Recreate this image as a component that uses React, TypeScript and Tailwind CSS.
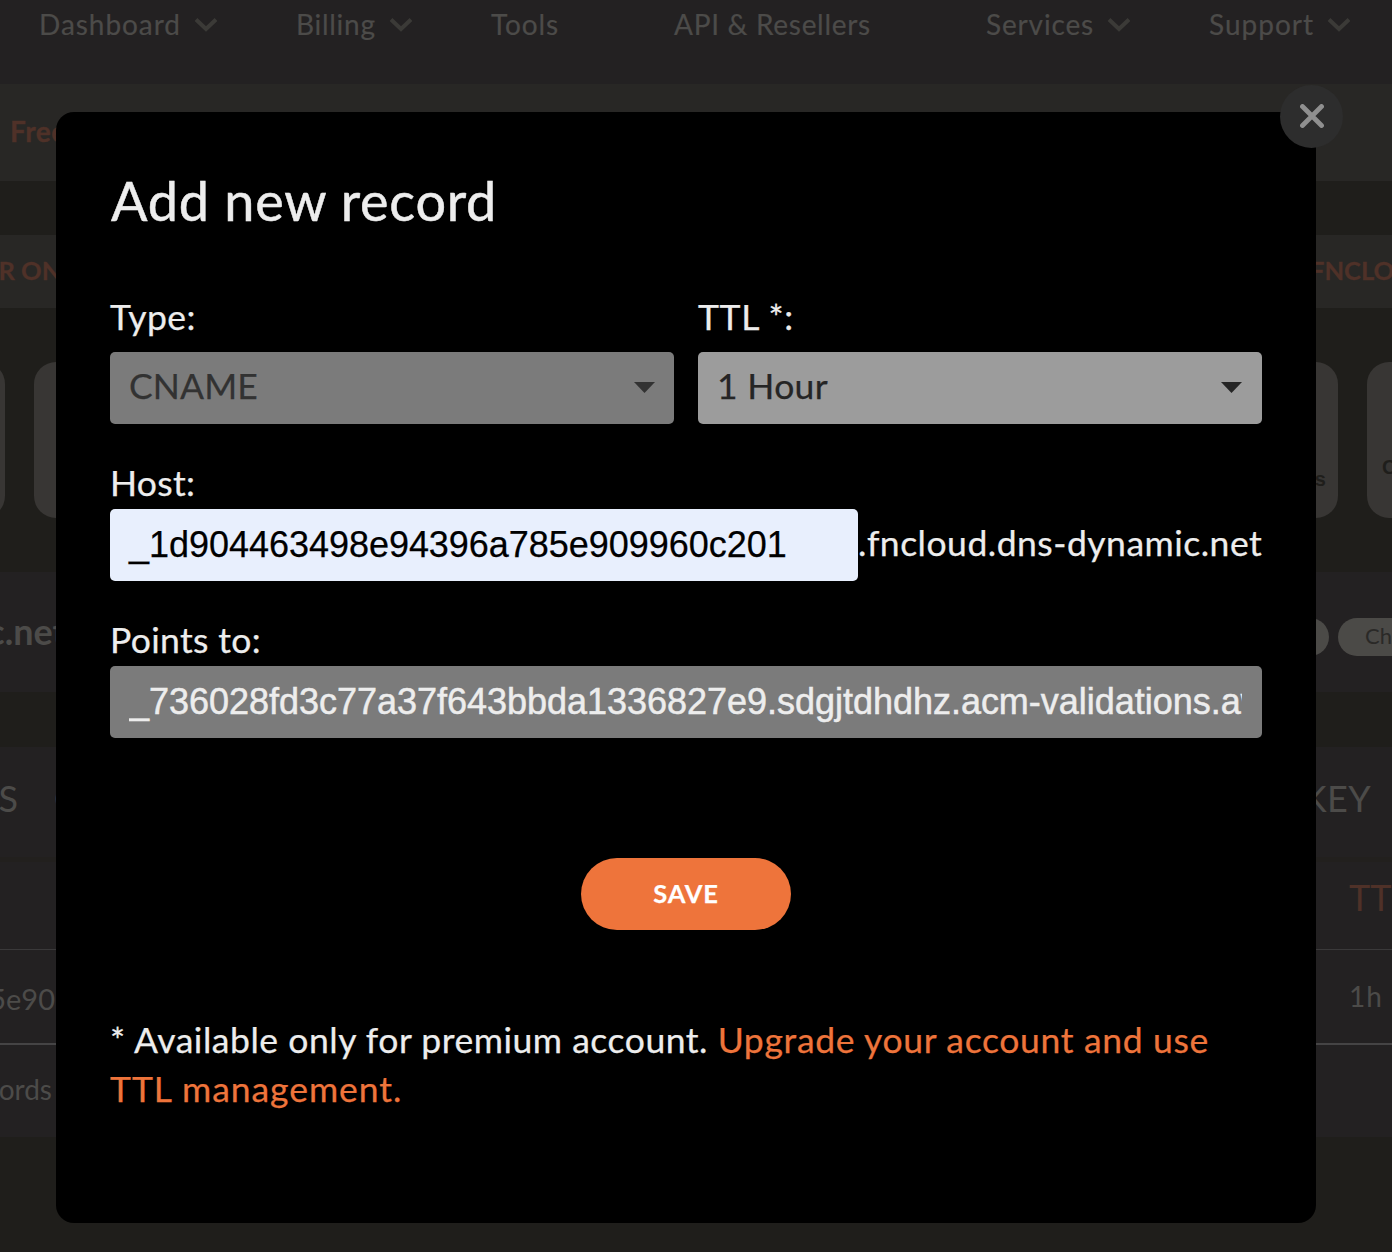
import React from "react";

function Chevron() {
  return (
    <svg width="24" height="14" viewBox="0 0 24 14" className="-mx-px shrink-0" fill="none">
      <path d="M2 1.5 L12 11 L22 1.5" stroke="#3b3a37" strokeWidth="4" />
    </svg>
  );
}

function NavItem({ label, menu, className }: { label: string; menu?: boolean; className: string }) {
  return (
    <div className={"flex items-center gap-[14px] h-[50px] " + className}>
      <span className="-mt-0.5">{label}</span>
      {menu && <Chevron />}
    </div>
  );
}

function Caret({ className }: { className: string }) {
  return (
    <svg width="21" height="11" viewBox="0 0 21 11" className={className}>
      <path d="M0 0 H21 L10.5 11 Z" fill="currentColor" />
    </svg>
  );
}

function Page() {
  return (
    <div className="w-[1392px] h-[1252px] text-[28px] text-[#4c4b49] whitespace-nowrap">
      <nav className="h-[84px] bg-[#232122] pl-[39px] grid grid-cols-[257px_195px_183px_312px_223px_auto] [-webkit-text-stroke:0.2px]">
        <NavItem label="Dashboard" menu className="tracking-[0.95px]" />
        <NavItem label="Billing" menu className="tracking-[0.72px]" />
        <NavItem label="Tools" className="tracking-[0.88px]" />
        <NavItem label="API & Resellers" className="tracking-[0.69px]" />
        <NavItem label="Services" menu className="tracking-[0.84px]" />
        <NavItem label="Support" menu className="tracking-[1px]" />
      </nav>
      <div className="h-[97px] bg-[#282725] flex items-center pl-2.5 pb-[3px] font-bold text-[#4f3128] [-webkit-text-stroke:0.4px]">
        <span className="tracking-[0.5px]">Free</span>
      </div>
      <div className="mt-[54px] h-[73px] bg-[#282725] flex items-center justify-between font-bold text-[25.5px] text-[#4f3128] pb-[3px] [-webkit-text-stroke:0.3px]">
        <div className="w-[76px] flex justify-end">
          <span>FOR ONE</span>
        </div>
        <div className="w-[82px]">FNCLOUD</div>
      </div>
      <div className="mt-[54px] h-[156px] flex justify-between font-['Liberation_Sans'] font-bold text-[20px] text-[#1f1e1b]">
        <div className="flex gap-[29px]">
          <div className="w-[160px] -ml-[155px] rounded-[22px] bg-[#383634]" />
          <div className="w-[160px] rounded-[22px] bg-[#383634]" />
        </div>
        <div className="flex gap-[29px]">
          <div className="w-[160px] rounded-[22px] bg-[#383634] flex justify-end pt-[102px] pr-3">records</div>
          <div className="w-[25px] rounded-l-[22px] bg-[#383634] pt-[90px] pl-[15px] overflow-hidden">Cloud</div>
        </div>
      </div>
      <div className="mt-[54px] h-[120px] bg-[#232122] flex justify-between items-center">
        <div className="w-[66px] flex justify-end pb-0.5 font-bold text-[36px]">dynamic.net</div>
        <div className="flex gap-[9px] pt-[10px] text-[22px] text-[#2a2927]">
          <div className="w-[120px] h-[38px] rounded-full bg-[#4b4a47]" />
          <div className="w-[54px] h-[38px] rounded-l-full bg-[#4b4a47] pl-[27px] leading-[36px] overflow-hidden">Check</div>
        </div>
      </div>
      <div className="mt-[55px] h-[390px] bg-[#232122]">
        <div className="h-[110px] flex justify-between items-center text-[36px] pb-[8px]">
          <div className="flex gap-[36px]">
            <div className="w-[18px] flex justify-end">DNS</div>
            <div>C</div>
          </div>
          <div className="pr-[21px] tracking-[0.4px]">KEY</div>
        </div>
        <div className="h-[5px] bg-[#22201e]" />
        <div className="h-[88px] border-b border-[#3a393a] flex justify-end items-center pb-[17px] text-[36px] text-[#4f3128]">
          <div className="w-[43px] overflow-hidden">TTL</div>
        </div>
        <div className="h-[95px] border-b-2 border-[#454445] flex justify-between items-center">
          <div className="w-[55px] flex justify-end text-[29px] pt-[5px]">5e90</div>
          <div className="w-[43px] pb-[1px] tracking-[1px]">1h</div>
        </div>
        <div className="h-[92px] flex items-center pb-1">
          <div className="w-[52px] flex justify-end">records</div>
        </div>
      </div>
    </div>
  );
}

export default function App() {
  return (
    <div className="relative w-[1392px] h-[1252px] overflow-hidden bg-[#1f1e1b] font-['Lato','Noto_Sans',sans-serif]">
      <Page />
      <div className="absolute left-[56px] top-[112px] w-[1260px] h-[1111px] rounded-[18px] bg-black px-[54px] pt-[59px] text-[35.5px] leading-[48px] text-[#ededed] whitespace-nowrap [-webkit-text-stroke:0.25px]">
        <h2 className="pl-px text-[54px] leading-[60px] tracking-[0.75px] [-webkit-text-stroke:0.5px]">Add new record</h2>
        <div className="mt-[62px] grid grid-cols-2 gap-6">
          <div>
            <div className="tracking-[0.4px]">Type:</div>
            <div className="mt-[11px] h-[72px] rounded-[5px] bg-[#7b7b7b] text-[#323232] pl-[19px] pr-[19px] flex items-center justify-between">
              <span className="pb-[5px] tracking-[0.1px]">CNAME</span>
              <Caret className="mb-px" />
            </div>
          </div>
          <div>
            <div className="tracking-[0.6px]">TTL *:</div>
            <div className="mt-[11px] h-[72px] rounded-[5px] bg-[#9c9c9c] text-[#252525] pl-[19px] pr-5 flex items-center justify-between">
              <span className="pb-[5px] tracking-[0.3px]">1 Hour</span>
              <Caret className="mb-px" />
            </div>
          </div>
        </div>
        <div className="mt-[35px] tracking-[0.3px]">Host:</div>
        <div className="mt-[2px] flex items-center">
          <div className="w-[748px] h-[72px] shrink-0 rounded-[5px] bg-[#e8effd] px-[19px] font-['Liberation_Sans'] text-[36px] leading-[72px] tracking-[-0.03px] text-black">
            _1d904463498e94396a785e909960c201
          </div>
          <span className="pb-[5px] tracking-[0.5px]">.fncloud.dns-dynamic.net</span>
        </div>
        <div className="mt-[35px] tracking-[0.35px]">Points to:</div>
        <div className="mt-[2px] h-[72px] rounded-[5px] bg-[#7b7b7b] pl-[19px] pr-5 font-['Liberation_Sans'] text-[36px] leading-[72px] tracking-[-0.02px] [-webkit-text-stroke:0.5px]">
          <div className="overflow-hidden">_736028fd3c77a37f643bbda1336827e9.sdgjtdhdhz.acm-validations.aws.</div>
        </div>
        <button className="mt-[120px] mx-auto w-[210px] h-[72px] rounded-full bg-[#ee743b] flex items-center justify-center pb-[3px] text-[25.5px] font-bold text-white tracking-[0.8px]">
          SAVE
        </button>
        <p className="mt-[85px] leading-[49px]">
          <span className="tracking-[0.54px]">* Available only for premium account. </span>
          <a className="tracking-[0.67px] text-[#ee743b]">Upgrade your account and use</a>
          <br />
          <a className="tracking-[0.95px] text-[#ee743b]">TTL management.</a>
        </p>
      </div>
      <button className="absolute left-[1280px] top-[85px] w-[63px] h-[63px] rounded-full bg-[#2d2d2d] flex items-center justify-center pb-px">
        <svg width="24" height="24" viewBox="0 0 24 24" fill="none">
          <path d="M2.5 2.5 L21.5 21.5 M21.5 2.5 L2.5 21.5" stroke="#8f8f8f" strokeWidth="4.8" strokeLinecap="round" />
        </svg>
      </button>
    </div>
  );
}
